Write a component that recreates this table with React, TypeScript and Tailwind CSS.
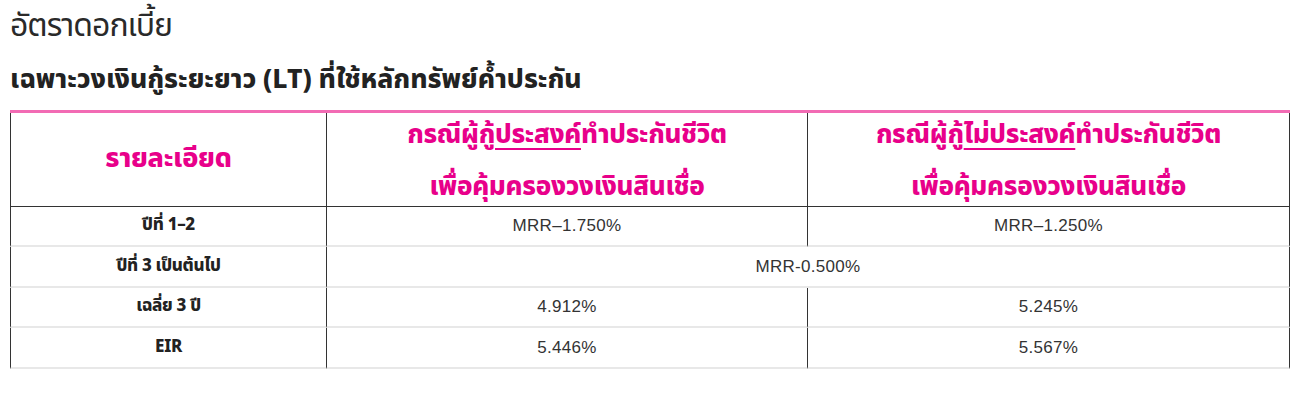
import React from "react";

const thai = "font-['Noto_Sans_Thai','Noto_Sans','Liberation_Sans',sans-serif]";
const num = "font-['Liberation_Sans',sans-serif] text-[17px] tracking-[0.3px] text-[#333]";

function Row({
  label,
  a,
  b,
  span,
  h,
}: {
  label: string;
  a: string;
  b?: string;
  span?: boolean;
  h: string;
}) {
  return (
    <>
      <div className={`flex ${h} items-center justify-center border-l border-b-2 border-l-[#333] border-b-[#e8e8e8] text-[17px] font-extrabold tracking-[-0.3px] text-[#222] ${thai}`}>
        {label}
      </div>
      {span ? (
        <div className={`col-span-2 flex ${h} items-center justify-center border-l border-r border-b-2 border-l-[#333] border-r-[#333] border-b-[#e8e8e8] ${num}`}>
          {a}
        </div>
      ) : (
        <>
          <div className={`flex ${h} items-center justify-center border-l border-b-2 border-l-[#333] border-b-[#e8e8e8] ${num}`}>
            {a}
          </div>
          <div className={`flex ${h} items-center justify-center border-l border-r border-b-2 border-l-[#333] border-r-[#333] border-b-[#e8e8e8] ${num}`}>
            {b}
          </div>
        </>
      )}
    </>
  );
}

export default function App() {
  return (
    <div className="h-[407px] w-[1294px] bg-white pl-[10px] pt-[6px]">
      <h1 className={`text-[32px] leading-[40px] font-normal tracking-[-1px] text-[#2a2a2a] ${thai}`}>
        อัตราดอกเบี้ย
      </h1>
      <h2 className={`mt-[17px] text-[26.5px] leading-[34px] font-extrabold tracking-[0px] text-[#222] ${thai}`}>
        เฉพาะวงเงินกู้ระยะยาว (LT) ที่ใช้หลักทรัพย์ค้ำประกัน
      </h2>
      <div className="mt-[13px] w-[1280px] border-t-[3px] border-t-[#f26bb4]">
        <div className="grid grid-cols-[316px_481px_483px]">
          <div className={`flex h-[94px] items-center justify-center border-l border-b border-l-[#333] border-b-[#333] text-[27px] font-extrabold tracking-[-0.3px] text-[#e8008a] ${thai}`}>
            รายละเอียด
          </div>
          <div className={`flex h-[94px] flex-col items-center justify-center border-l border-b border-l-[#333] border-b-[#333] pt-[2px] text-[26px] leading-[52px] font-extrabold tracking-[-0.3px] text-[#e8008a] ${thai}`}>
            <span>
              กรณีผู้กู้<span className="underline decoration-[1.5px] underline-offset-[5px]">ประสงค์</span>ทำประกันชีวิต
            </span>
            <span>เพื่อคุ้มครองวงเงินสินเชื่อ</span>
          </div>
          <div className={`flex h-[94px] flex-col items-center justify-center border-l border-r border-b border-l-[#333] border-r-[#333] border-b-[#333] pt-[2px] text-[26px] leading-[52px] font-extrabold tracking-[-0.3px] text-[#e8008a] ${thai}`}>
            <span>
              กรณีผู้กู้<span className="underline decoration-[1.5px] underline-offset-[5px]">ไม่ประสงค์</span>ทำประกันชีวิต
            </span>
            <span>เพื่อคุ้มครองวงเงินสินเชื่อ</span>
          </div>
          <Row h="h-[40px]" label="ปีที่ 1–2" a="MRR–1.750%" b="MRR–1.250%" />
          <Row h="h-[41px]" label="ปีที่ 3 เป็นต้นไป" a="MRR-0.500%" span />
          <Row h="h-[40px]" label="เฉลี่ย 3 ปี" a="4.912%" b="5.245%" />
          <Row h="h-[41px]" label="EIR" a="5.446%" b="5.567%" />
        </div>
      </div>
    </div>
  );
}
